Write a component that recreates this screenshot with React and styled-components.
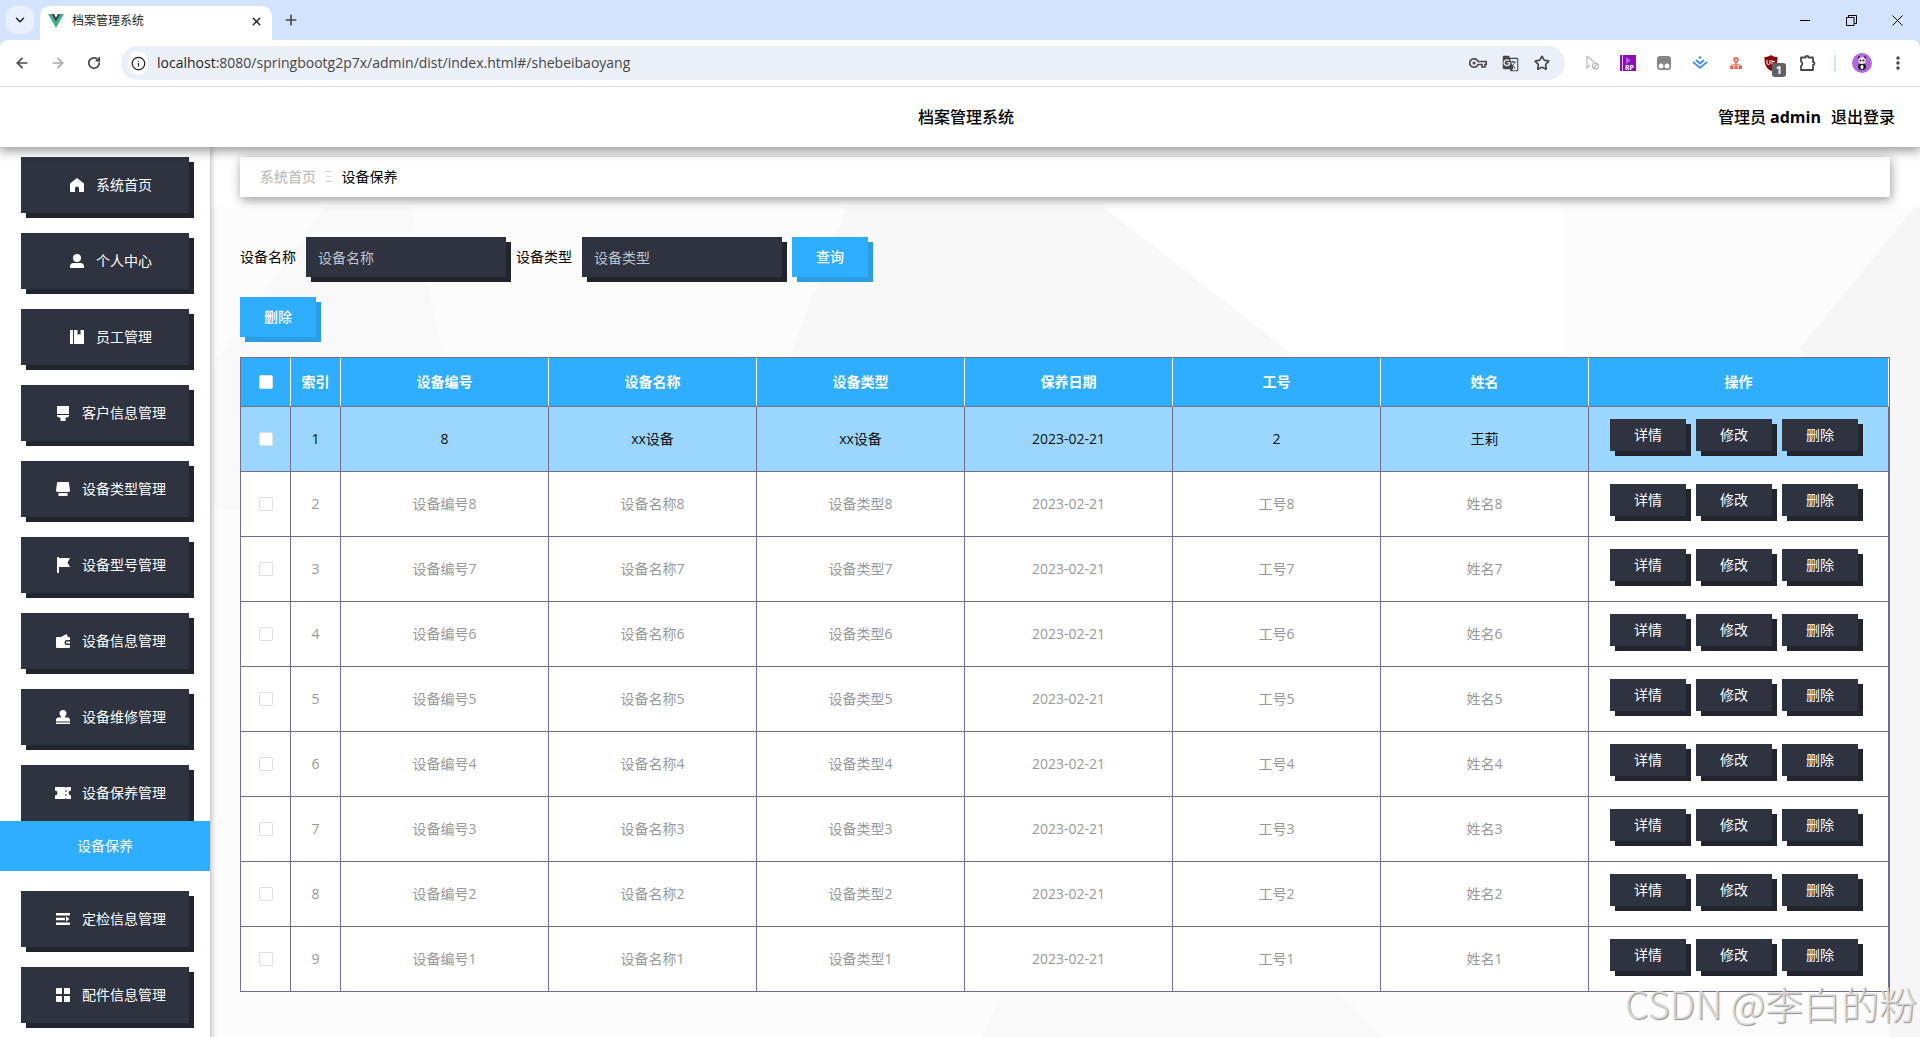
import React, { useState } from 'react';
import styled, { createGlobalStyle, css } from 'styled-components';
import { ChevronDown, ArrowLeft, ArrowRight, RotateCw, X, Plus, Star, Info } from 'lucide-react';
import { MdGTranslate, MdMoreVert } from 'react-icons/md';

const colors = {
  dark: '#2e333f',
  darkShadow: '#22252e',
  blue: '#2faeff',
  blueShadow: '#2b9de4',
  rowActive: '#9ad6ff',
  line: '#6f6f8c',
  strip: '#d3e3fd',
};

const GlobalStyle = createGlobalStyle`
  * {
    box-sizing: border-box;
  }
  body {
    margin: 0;
    background: #fff;
    color: #000;
    font-family: "Open Sans", "Noto Sans CJK SC", sans-serif;
    font-size: 14px;
    line-height: 20px;
  }
  button, input {
    font: inherit;
  }
  button {
    border: none;
    padding: 0;
    cursor: pointer;
  }
`;

const Page = styled.div`
  display: flex;
  flex-direction: column;
  min-height: 100vh;
  position: relative;
  overflow: hidden;
`;

/* ---------- browser window ---------- */

const TabStrip = styled.div`
  display: flex;
  align-items: center;
  height: 40px;
  padding-left: 6px;
  background: ${colors.strip};
`;

const PlainButton = styled.button`
  display: flex;
  align-items: center;
  justify-content: center;
  width: ${(p) => p.$w || 36}px;
  height: 28px;
  flex-shrink: 0;
  background: transparent;
  color: ${(p) => p.$color || '#474747'};
`;

const TabSearch = styled(PlainButton)`
  background: #e9f0fd;
  border-radius: 10px;
  color: #1f1f1f;
`;

const Tab = styled.div`
  display: flex;
  align-items: center;
  align-self: flex-end;
  width: 232px;
  height: 34px;
  margin-left: 6px;
  padding: 0 2px 4px 8px;
  background: #fff;
  border-radius: 10px 10px 0 0;
  font-size: 12px;
  color: #1f1f1f;
`;

const TabTitle = styled.span`
  flex: 1;
  margin-left: 8px;
`;

const WindowControls = styled.div`
  display: flex;
  margin-left: auto;
`;

const Toolbar = styled.div`
  position: relative;
  z-index: 3;
  background: ${colors.strip};
`;

const ToolbarInner = styled.div`
  display: flex;
  align-items: center;
  height: 47px;
  padding: 0 4px;
  background: #fff;
  border-bottom: 1px solid #dcdcdc;
  border-radius: 8px 8px 0 0;
`;

const AddressBar = styled.div`
  display: flex;
  align-items: center;
  flex: 1;
  height: 34px;
  margin: 0 9px;
  padding: 0 7px;
  border-radius: 17px;
  background: #ebeff8;
`;

const SiteInfo = styled(PlainButton)`
  width: 20px;
  height: 24px;
  border-radius: 12px;
  background: #fff;
  color: #1f1f1f;
`;

const Url = styled.span`
  flex: 1;
  margin-left: 9px;
  color: #474747;

  b {
    font-weight: 400;
    color: #1f1f1f;
  }
`;

const Divider = styled.span`
  width: 2px;
  height: 16px;
  margin: 0 8px;
  background: #d3e3fd;
`;

const BadgedButton = styled(PlainButton)`
  position: relative;
`;

const ExtensionBadge = styled.span`
  position: absolute;
  right: 4px;
  bottom: 0;
  width: 14px;
  height: 14px;
  border-radius: 3px;
  background: #5f6368;
  color: #fff;
  font-size: 11px;
  font-weight: 700;
  line-height: 14px;
`;

/* ---------- application ---------- */

const Header = styled.header`
  display: grid;
  grid-template-columns: 1fr auto 1fr;
  align-items: center;
  height: 60px;
  padding: 0 25px 0 37px;
  background: #fff;
  box-shadow: 0 3px 10px 1px rgba(0, 0, 0, 0.4);
  font-size: 16px;
  font-weight: 500;
  z-index: 2;
`;

const Title = styled.h1`
  grid-column: 2;
  margin: 0;
  font-size: 16px;
  font-weight: 500;
`;

const Account = styled.div`
  display: flex;
  justify-content: flex-end;
  gap: 10px;

  b {
    font-weight: 700;
  }
`;

const LogoutButton = styled.button`
  background: transparent;
  color: #000;
`;

const Body = styled.div`
  display: flex;
  flex: 1;
`;

const Sidebar = styled.nav`
  width: 210px;
  flex-shrink: 0;
  padding-top: 10px;
  background: #fff;
  box-shadow: 1px 0 6px rgba(0, 0, 0, 0.3);
  z-index: 1;
`;

const MenuButton = styled.button`
  display: flex;
  align-items: center;
  justify-content: center;
  gap: 12px;
  width: 168px;
  height: 56px;
  margin: 0 21px ${(p) => (p.$open ? 0 : 20)}px;
  padding-left: 12px;
  background: ${colors.dark};
  box-shadow: 5px 5px 0 ${colors.darkShadow};
  color: #fff;

  svg {
    fill: #fff;
    overflow: visible;
  }
`;

const SubMenuLink = styled.a`
  display: block;
  position: relative;
  margin-bottom: 20px;
  background: ${colors.blue};
  color: #fff;
  line-height: 50px;
  text-align: center;
  text-decoration: none;
`;

const Main = styled.main`
  position: relative;
  flex: 1;
  min-width: 0;
  padding: 10px 30px 0;
`;

const Backdrop = styled.svg`
  position: absolute;
  inset: 60px 0 0;
  width: 100%;
  height: calc(100% - 60px);
  z-index: -1;
`;

const Breadcrumb = styled.div`
  display: flex;
  align-items: center;
  gap: 9px;
  height: 40px;
  padding: 0 20px;
  background: #fff;
  box-shadow: 1px 3px 10px rgba(0, 0, 0, 0.4);

  a {
    color: #c0c0c0;
    text-decoration: none;
    font-weight: 500;
  }
  i {
    color: #c8c8c8;
    font-style: normal;
    font-weight: 300;
  }
`;

const SearchForm = styled.form`
  display: flex;
  align-items: center;
  gap: 10px;
  margin-top: 40px;
`;

const Field = styled.label`
  display: flex;
  align-items: center;
  gap: 10px;
`;

const TextInput = styled.input`
  width: 200px;
  height: 40px;
  padding: 0 12px;
  border: none;
  outline: none;
  background: ${colors.dark};
  box-shadow: 5px 5px 0 ${colors.darkShadow};
  color: #fff;

  &::placeholder {
    color: #c0c4cc;
  }
`;

const buttonBase = css`
  width: 76px;
  color: #fff;
`;

const BlueButton = styled.button`
  ${buttonBase}
  height: 40px;
  background: ${colors.blue};
  box-shadow: 5px 5px 0 ${colors.blueShadow};
  font-weight: 500;
`;

const RowButton = styled.button`
  ${buttonBase}
  height: 32px;
  background: ${colors.dark};
  box-shadow: 5px 5px 0 ${colors.darkShadow};
`;

const BatchBar = styled.div`
  display: flex;
  margin: 20px 0;
`;

const Table = styled.table`
  width: 100%;
  table-layout: fixed;
  border: 1px solid ${colors.line};
  border-bottom: none;
  border-spacing: 0;
  background: #fff;
  text-align: center;

  th, td {
    padding: 0;
    border-right: 1px solid ${colors.line};
    border-bottom: 1px solid ${colors.line};
  }
  th {
    height: 49px;
    border-right-color: #fff;
    background: ${colors.blue};
    color: #fff;
    font-weight: 700;
  }
  td {
    height: 65px;
  }
`;

const Row = styled.tr`
  background: ${(p) => (p.$active ? colors.rowActive : '#fff')};
  color: ${(p) => (p.$active ? '#111' : '#999')};
`;

const Checkbox = styled.input`
  appearance: none;
  display: block;
  width: 14px;
  height: 14px;
  margin: 0 auto;
  border: 1px solid #dcdfe6;
  border-radius: 2px;
  background: #fff;

  &:checked {
    background: ${colors.blue};
  }
`;

const Actions = styled.div`
  display: flex;
  gap: 10px;
  padding: 0 0 8px 21px;
`;

const Watermark = styled.div`
  position: absolute;
  right: 3px;
  bottom: 12px;
  z-index: 3;
  color: rgba(225, 225, 225, 0.85);
  font-family: "Noto Sans CJK SC", sans-serif;
  font-size: 38px;
  font-weight: 300;
  line-height: 56px;
  text-shadow: 1px 1px 1px #8c8c8c;
  white-space: nowrap;
  pointer-events: none;
`;

const icons = {
  home: <path d="M7 0 14 5.4V13a1 1 0 0 1-1 1H9v-3.5a2 2 0 0 0-4 0V14H1a1 1 0 0 1-1-1V5.4z" />,
  user: <path d="M7 0a4 4 0 0 1 4 4 4 4 0 0 1-8 0 4 4 0 0 1 4-4zM3.5 9h7A3.5 3.5 0 0 1 14 12.5V14H0v-1.5A3.5 3.5 0 0 1 3.5 9z" />,
  book: <path d="M0 0h3v14H0zM4 0h3.5v5L9 4l1.5 1V0H14v14H4z" />,
  brush: <path d="M1 0h12v8H1zM1 9h12v1.5L9.5 12v3h-5v-3L1 10.5z" />,
  printer: <path d="M2 0h10a1 1 0 0 1 1 1l1 8-1 1H1L0 9l1-8a1 1 0 0 1 1-1zM2.500 11h9v3h-9z" />,
  flag: <path d="M1-1h2v1h11l-2.5 4.5L14 9H3v6H1z" />,
  wallet: <path d="M5 3l5.500-3L12 3h1a1 1 0 0 1 1 1v2h-3a2.500 2.500 0 0 0 0 5h3v2a1 1 0 0 1-1 1H1a1 1 0 0 1-1-1V4a1 1 0 0 1 1-1zM11 7.500h3v2h-3a1 1 0 0 1 0-2z" />,
  stamp: <path d="M7 0a3.500 3.500 0 0 1 3.500 3.500C10.500 5 9 6 9 7.500h3.500L14 9v2.500H0V9l1.500-1.500H5C5 6 3.500 5 3.500 3.500A3.500 3.500 0 0 1 7 0zM0 12.500h14V14H0z" />,
  ticket: <path fillRule="evenodd" d="M-1 1h10l1 1 1-1h4v3.500a2.500 2.500 0 0 0 0 5V13h-4l-1-1-1 1H-1V9.500a2.500 2.500 0 0 0 0-5zM9.500 4v2h1V4zm0 4v2h1V8z" />,
  fold: <path d="M0 1h14v2.400H0zM0 5.800h9v2.400H0zM10 4.200 13.500 7 10 9.800zM0 10.600h14V13H0z" />,
  grid: <path d="M1 0h5v6H0V1a1 1 0 0 1 1-1zM8 0h5a1 1 0 0 1 1 1v5H8zM0 8h6v6H1a1 1 0 0 1-1-1zM8 8h6v5a1 1 0 0 1-1 1H8z" />,
};

const menu = [
  { icon: 'home', label: '系统首页' },
  { icon: 'user', label: '个人中心' },
  { icon: 'book', label: '员工管理' },
  { icon: 'brush', label: '客户信息管理' },
  { icon: 'printer', label: '设备类型管理' },
  { icon: 'flag', label: '设备型号管理' },
  { icon: 'wallet', label: '设备信息管理' },
  { icon: 'stamp', label: '设备维修管理' },
  { icon: 'ticket', label: '设备保养管理', child: '设备保养' },
  { icon: 'fold', label: '定检信息管理' },
  { icon: 'grid', label: '配件信息管理' },
];

const columns = ['设备编号', '设备名称', '设备类型', '保养日期', '工号', '姓名'];

const rows = [
  ['8', 'xx设备', 'xx设备', '2023-02-21', '2', '王莉'],
  ...[8, 7, 6, 5, 4, 3, 2, 1].map((n) => [
    `设备编号${n}`,
    `设备名称${n}`,
    `设备类型${n}`,
    '2023-02-21',
    `工号${n}`,
    `姓名${n}`,
  ]),
];

function BrowserBar() {
  return (
    <>
      <TabStrip>
        <TabSearch $w={28} aria-label="搜索标签页"><ChevronDown size={14} strokeWidth={2.5} /></TabSearch>
        <Tab>
          <svg width="16" height="14" viewBox="0 0 16 14">
            <path d="M0 0h3.200L8 8.300 12.800 0H16L8 14z" fill="#41b883" />
            <path d="M3.200 0H6l2 3.500L10 0h2.800L8 8.300z" fill="#35495e" />
          </svg>
          <TabTitle>档案管理系统</TabTitle>
          <PlainButton $w={28} $color="#1f1f1f" aria-label="关闭标签页"><X size={13} strokeWidth={2.5} /></PlainButton>
        </Tab>
        <PlainButton $w={38} aria-label="新标签页"><Plus size={16} strokeWidth={2.5} /></PlainButton>
        <WindowControls>
          <PlainButton $w={46} aria-label="最小化">
            <svg width="10" height="10" stroke="#000"><path d="M0 5.500h10" /></svg>
          </PlainButton>
          <PlainButton $w={46} aria-label="还原">
            <svg width="11" height="11" stroke="#000" fill="none">
              <path d="M.5 2.500h7.500v8H.5zM2.500 2.500v-2h8v8H8" />
            </svg>
          </PlainButton>
          <PlainButton $w={46} aria-label="关闭">
            <svg width="11" height="11" stroke="#000"><path d="m.5.5 10 10m0-10-10 10" /></svg>
          </PlainButton>
        </WindowControls>
      </TabStrip>
      <Toolbar>
        <ToolbarInner>
          <PlainButton aria-label="后退"><ArrowLeft size={16} strokeWidth={2.5} /></PlainButton>
          <PlainButton $color="#a8a8a8" aria-label="前进"><ArrowRight size={16} strokeWidth={2.5} /></PlainButton>
          <PlainButton aria-label="刷新"><RotateCw size={14} strokeWidth={3} /></PlainButton>
          <AddressBar>
            <SiteInfo aria-label="网站信息"><Info size={15} /></SiteInfo>
            <Url><b>localhost</b>:8080/springbootg2p7x/admin/dist/index.html#/shebeibaoyang</Url>
            <PlainButton $w={32} aria-label="密码">
              <svg width="18" height="12" fill="none" stroke="#474747" strokeWidth="1.600">
                <path d="M9 4.500A4.300 4.300 0 1 0 9 7.500h4V10h3V7.500h1.200v-3z" />
                <circle cx="5" cy="6" r="1.500" fill="#474747" stroke="none" />
              </svg>
            </PlainButton>
            <PlainButton $w={32} aria-label="翻译"><MdGTranslate size={17} /></PlainButton>
            <PlainButton $w={32} aria-label="收藏"><Star size={16} strokeWidth={2.500} /></PlainButton>
          </AddressBar>
          <PlainButton aria-label="光标扩展">
            <svg width="16" height="16" fill="none" stroke="#bdbdbd" strokeWidth="1.300">
              <path d="M3 1v12l3-3M3 1l7 6" />
              <circle cx="11.500" cy="11" r="3" />
              <path d="m9.500 13 4-4" />
            </svg>
          </PlainButton>
          <PlainButton aria-label="Axure RP">
            <svg width="16" height="16">
              <path d="M0 0h16v16H0z" fill="#8a0fb8" />
              <path d="M2 0h1v16H2z" fill="#e9b6f5" />
              <path d="M6 2v7l5-3.500z" fill="#c85be8" />
              <text x="5" y="15" fontSize="7" fontWeight="700" fill="#fff">RP</text>
            </svg>
          </PlainButton>
          <PlainButton aria-label="脚本扩展">
            <svg width="14" height="14">
              <rect width="14" height="14" rx="3" fill="#858585" />
              <circle cx="4" cy="10" r="2.500" fill="#fff" />
              <circle cx="10" cy="10" r="2.500" fill="#fff" />
            </svg>
          </PlainButton>
          <PlainButton aria-label="掘金扩展">
            <svg width="16" height="14" fill="none" stroke="#3b8cf5" strokeWidth="1.700">
              <path d="m1 6 7 6 7-6M4 4l4 3.500L12 4" />
              <path d="m8 0 1.800 1.500L8 3 6.200 1.500z" fill="#3b8cf5" stroke="none" />
            </svg>
          </PlainButton>
          <PlainButton aria-label="结构扩展">
            <svg width="12" height="12" fill="#ee6352">
              <circle cx="6" cy="2.700" r="2.700" />
              <circle cx="6" cy="2.700" r="1" fill="#fff" />
              <path d="M5.400 5h1.200v1.500L11 8v1H9.500V8.300L6.600 7.500V9H5.400V7.500l-2.900.8V9H1V8l4.400-1.500zM0 9h3.400v3H0zM4.300 9h3.400v3H4.300zM8.600 9H12v3H8.600z" />
            </svg>
          </PlainButton>
          <BadgedButton aria-label="uBlock">
            <svg width="16" height="16" viewBox="0 0 16 16">
              <path d="M7 0c2 1.500 4 2 6.500 2 0 7-1 11-6.500 14C1.500 13 .5 9 .5 2 3 2 5 1.500 7 0z" fill="#8a0808" />
              <path d="M3 5v3a1.500 1.500 0 0 0 3 0V5M8 5v4.500m0-3h3" fill="none" stroke="#fff" />
            </svg>
            <ExtensionBadge>1</ExtensionBadge>
          </BadgedButton>
          <PlainButton aria-label="扩展程序">
            <svg width="18" height="18" fill="none" stroke="#474747" strokeWidth="1.800">
              <path d="M2 3.500h4.500a1.500 1.500 0 0 1 3 0H14V8a1.500 1.500 0 0 1 0 3v5H2v-4a2.500 2.500 0 0 0 0-4.500z" strokeLinejoin="round" />
            </svg>
          </PlainButton>
          <Divider />
          <PlainButton aria-label="用户">
            <svg width="20" height="20">
              <circle cx="10" cy="10" r="10" fill="#b367e0" />
              <ellipse cx="10" cy="13.500" rx="4" ry="3.500" fill="#222" />
              <ellipse cx="10" cy="14" rx="1.500" ry="2" fill="#fff" />
              <circle cx="7" cy="4.500" r="1.200" fill="#222" />
              <circle cx="13" cy="4.500" r="1.200" fill="#222" />
              <circle cx="10" cy="7.500" r="3.600" fill="#f4e8f0" />
              <circle cx="8.500" cy="7.500" r="1" fill="#222" />
              <circle cx="11.500" cy="7.500" r="1" fill="#222" />
            </svg>
          </PlainButton>
          <PlainButton aria-label="更多"><MdMoreVert size={20} /></PlainButton>
        </ToolbarInner>
      </Toolbar>
    </>
  );
}

function SideMenu() {
  return (
    <Sidebar>
      {menu.map((item) => (
        <React.Fragment key={item.label}>
          <MenuButton $open={!!item.child}>
            <svg width="14" height="14" viewBox="0 0 14 14">{icons[item.icon]}</svg>
            {item.label}
          </MenuButton>
          {item.child && <SubMenuLink href="#/shebeibaoyang">{item.child}</SubMenuLink>}
        </React.Fragment>
      ))}
    </Sidebar>
  );
}

function DataTable() {
  const [selected, setSelected] = useState([]);
  const allSelected = selected.length === rows.length;

  const toggle = (i) => {
    setSelected(selected.includes(i) ? selected.filter((n) => n !== i) : [...selected, i]);
  };

  return (
    <Table>
      <colgroup>
        <col width="50" />
        <col width="50" />
        {columns.map((c) => <col key={c} />)}
        <col width="300" />
      </colgroup>
      <thead>
        <tr>
          <th>
            <Checkbox
              type="checkbox"
              aria-label="全选"
              checked={allSelected}
              onChange={() => setSelected(allSelected ? [] : rows.map((r, i) => i))}
            />
          </th>
          <th>索引</th>
          {columns.map((c) => <th key={c}>{c}</th>)}
          <th>操作</th>
        </tr>
      </thead>
      <tbody>
        {rows.map((row, i) => (
          <Row key={i} $active={i === 0}>
            <td>
              <Checkbox
                type="checkbox"
                aria-label={`选择第${i + 1}行`}
                checked={selected.includes(i)}
                onChange={() => toggle(i)}
              />
            </td>
            <td>{i + 1}</td>
            {row.map((cell, j) => <td key={j}>{cell}</td>)}
            <td>
              <Actions>
                <RowButton>详情</RowButton>
                <RowButton>修改</RowButton>
                <RowButton>删除</RowButton>
              </Actions>
            </td>
          </Row>
        ))}
      </tbody>
    </Table>
  );
}

export default function App() {
  const [name, setName] = useState('');
  const [type, setType] = useState('');

  return (
    <Page>
      <GlobalStyle />
      <BrowserBar />
      <Header>
        <Title>档案管理系统</Title>
        <Account>
          <span>管理员 <b>admin</b></span>
          <LogoutButton>退出登录</LogoutButton>
        </Account>
      </Header>
      <Body>
        <SideMenu />
        <Main>
          <Backdrop viewBox="0 0 1710 830" preserveAspectRatio="none" aria-hidden="true">
            <path d="M0 0h1710v830H0z" fill="#fcfcfc" />
            <path d="M115 0h85l45 200v100H0V160z" fill="#f9f9f9" />
            <path d="M636 0h257l260 200H560z" fill="#f8f8f8" />
            <path d="M893 0h460v200h-200z" fill="#fff" />
            <path d="M1705 0h5v830h-30v-500l-90-190z" fill="#f6f6f6" />
            <path d="M800 760h310l70 70H770z" fill="#f9f9f9" />
          </Backdrop>
          <Breadcrumb>
            <a href="#/">系统首页</a>
            <i>Ξ</i>
            <span>设备保养</span>
          </Breadcrumb>
          <SearchForm onSubmit={(e) => e.preventDefault()}>
            <Field>
              设备名称
              <TextInput placeholder="设备名称" value={name} onChange={(e) => setName(e.target.value)} />
            </Field>
            <Field>
              设备类型
              <TextInput placeholder="设备类型" value={type} onChange={(e) => setType(e.target.value)} />
            </Field>
            <BlueButton type="submit">查询</BlueButton>
          </SearchForm>
          <BatchBar>
            <BlueButton>删除</BlueButton>
          </BatchBar>
          <DataTable />
        </Main>
      </Body>
      <Watermark>CSDN @李白的粉</Watermark>
    </Page>
  );
}
